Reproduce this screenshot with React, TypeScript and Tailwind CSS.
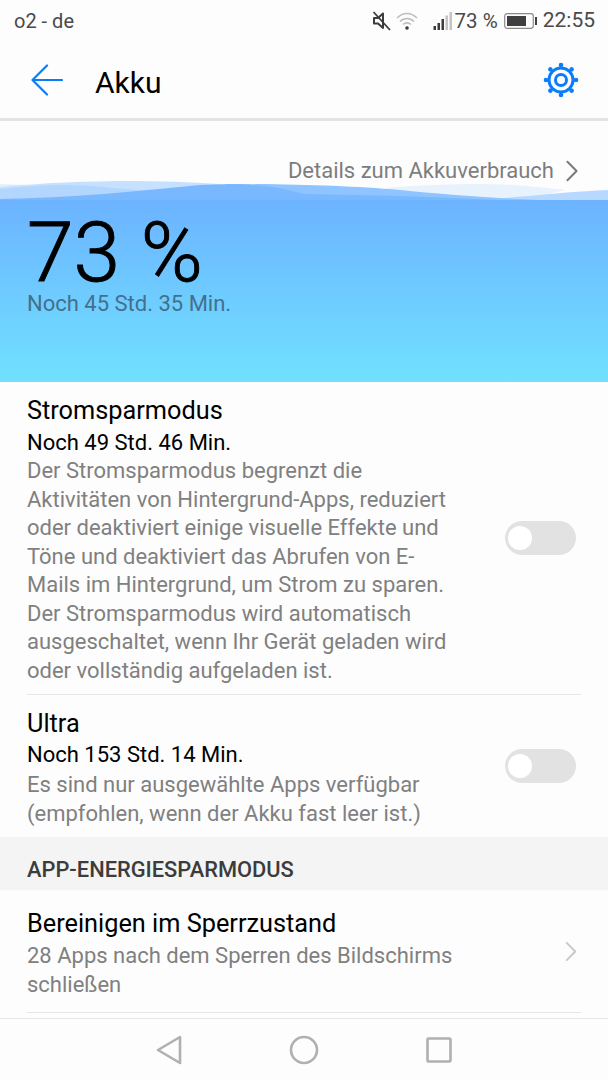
function Toggle() {
  return (
    <div className="w-[71px] h-[34px] rounded-full bg-[#e2e2e2] flex items-center pl-[3px] shrink-0">
      <div className="w-[24px] h-[24px] rounded-full bg-white" />
    </div>
  );
}
function Chevron({ color, className }: { color: string; className: string }) {
  return (
    <svg className={className} viewBox="0 0 14 24" fill="none" stroke={color} strokeWidth="2.2" strokeLinecap="round" strokeLinejoin="round">
      <path d="M2 2 L12 12 L2 22" />
    </svg>
  );
}
const teeth = [0, 45, 90, 135, 180, 225, 270, 315];
export default function App() {
  return (
    <div className="w-[608px] h-[1080px] bg-[#fdfdfd] overflow-hidden flex flex-col font-['Roboto',sans-serif]">
      {/* status bar */}
      <div className="h-[42px] flex items-center pl-[14px] pr-[13px] text-[#4a4a4a] text-[20px] shrink-0">
        <span>o2 - de</span>
        <div className="ml-auto flex items-center">
          <svg width="20" height="20" viewBox="0 0 20 20" fill="none" stroke="#3c3c3c" strokeWidth="1.8">
            <path d="M2 7 H6 L11 2.5 V17 L6 12.5 H2 Z" fill="#fdfdfd" strokeWidth="2" strokeLinejoin="round" />
            <path d="M1.5 1 L18 19" />
          </svg>
          <svg className="ml-[3px]" width="24" height="20" viewBox="0 0 24 20" fill="none" stroke="#bdbdbd" strokeWidth="1.6">
            <path d="M2 7 C8 1 16 1 22 7" />
            <path d="M5 10.5 C9 6.5 15 6.5 19 10.5" />
            <path d="M8 13.5 C10.5 11.5 13.5 11.5 16 13.5" />
            <circle cx="12" cy="17" r="1.8" fill="#3c3c3c" stroke="none" />
          </svg>
          <svg className="ml-[14px]" width="20" height="20" viewBox="0 0 20 20">
            <rect x="0.5" y="15" width="2.5" height="4" fill="#3c3c3c" />
            <rect x="4.5" y="12" width="2.5" height="7" fill="#3c3c3c" />
            <rect x="8.5" y="8" width="2.5" height="11" fill="#3c3c3c" />
            <rect x="12.5" y="4.5" width="2.5" height="14.5" fill="#c4c4c4" />
            <rect x="16.5" y="1" width="2.5" height="18" fill="#c4c4c4" />
          </svg>
          <span className="ml-[2px] text-[20.5px]">73 %</span>
          <svg className="ml-[6px]" width="34" height="18" viewBox="0 0 34 18">
            <rect x="0.7" y="1.7" width="28.6" height="14.6" rx="2.5" fill="none" stroke="#8a8a8a" strokeWidth="1.2" />
            <rect x="3" y="4" width="19" height="10" fill="#3f3f3f" />
            <rect x="31" y="5" width="2" height="8" fill="#3f3f3f" />
          </svg>
          <span className="ml-[5px] text-[21px]">22:55</span>
        </div>
      </div>
      {/* toolbar */}
      <div className="h-[79px] border-b-[3px] border-[#e3e3e3] flex items-center pl-[31px] pr-[29px] shrink-0">
        <svg width="32" height="32" viewBox="0 0 32 32" fill="none" stroke="#0a7dfa" strokeWidth="2.2" strokeLinecap="round" strokeLinejoin="round">
          <path d="M1.5 16 H31 M16 1.5 L1.5 16 L16 30.5" />
        </svg>
        <span className="ml-[32px] text-[30px] text-black leading-none mt-[5px]">Akku</span>
        <svg className="ml-auto" width="36" height="36" viewBox="0 0 36 36" fill="none" stroke="#0a7dfa">
          <circle cx="18" cy="18" r="12" strokeWidth="3" />
          <circle cx="18" cy="18" r="5.5" strokeWidth="3" />
          <g fill="#0a7dfa" stroke="none">
            {teeth.map((a) => (
              <circle key={a} cx="18" cy="3" r="2.3" transform={`rotate(${a} 18 18)`} />
            ))}
          </g>
        </svg>
      </div>
      {/* hero */}
      <div className="relative h-[261px] shrink-0 flex flex-col">
        <div className="h-[79px] shrink-0" />
        <div className="flex-1 bg-gradient-to-b from-[#6cb3ff] to-[#70e1ff]" />
        <svg className="absolute left-0 top-[59px]" width="608" height="21" viewBox="0 180 608 21">
          <path d="M0 184 C20 185 40 185 70 185 V201 H0 Z" fill="#e3f0fe" />
          <path d="M0 187 C40 183 90 181 130 181 C160 181 190 182 220 184 V201 H0 Z" fill="#c6e0ff" />
          <path d="M0 189 C20 187 40 185 70 185 C100 186 120 189 150 191 V201 H0 Z" fill="#b3d6ff" />
          <path d="M385 188 C420 185 450 184 480 184 C510 184 540 187 565 190 L520 201 L400 201 Z" fill="#e7f2fd" />
          <path d="M505 198 C540 195 580 191 608 190 V201 H505 Z" fill="#b8d9ff" />
          <path d="M225 184 C300 184 350 186 400 190 C440 194 490 198 540 200 V201 H225 Z" fill="#8ec4ff" />
          <path d="M0 199 C70 198 140 191 200 185 C240 183 270 184 304 194 C370 195 440 197 500 200 V201 H0 Z" fill="#79b8ff" />
          <path d="M0 200 H608 V201 H0 Z" fill="#6cb3ff" />
        </svg>
        <div className="absolute inset-x-0 top-0 pt-[33px] pr-[29px] flex items-center justify-end text-[#7d7d7d] text-[22px]">
          <span>Details zum Akkuverbrauch</span>
          <Chevron color="#7a7a7a" className="ml-[11px] w-[14px] h-[22px]" />
        </div>
        <div className="absolute left-[27px] top-[93px] flex flex-col">
          <span className="text-[84px] leading-[78px] text-black font-light [-webkit-text-stroke:1px_black]">73 %</span>
          <span className="text-[22px] leading-[24px] text-[#43708d]">Noch 45 Std. 35 Min.</span>
        </div>
      </div>
      {/* settings */}
      <div className="pl-[27px] pr-[27px] flex flex-col">
        <div className="flex items-start border-b border-[#e6e6e6] h-[313px] pt-[15px]">
          <div className="w-[440px] shrink-0">
            <div className="text-[25.3px] leading-[28px] text-black">Stromsparmodus</div>
            <div className="text-[22px] leading-[28px] text-black mt-[4px]">Noch 49 Std. 46 Min.</div>
            <div className="text-[22px] leading-[28.5px] text-[#808080]">
              Der Stromsparmodus begrenzt die<br />Aktivitäten von Hintergrund-Apps, reduziert<br />oder deaktiviert einige visuelle Effekte und<br />Töne und deaktiviert das Abrufen von E-<br />Mails im Hintergrund, um Strom zu sparen.<br />Der Stromsparmodus wird automatisch<br />ausgeschaltet, wenn Ihr Gerät geladen wird<br />oder vollständig aufgeladen ist.
            </div>
          </div>
          <div className="ml-auto mr-[5px] mt-[124px]"><Toggle /></div>
        </div>
        <div className="flex items-start h-[142px] pt-[15px]">
          <div className="w-[440px] shrink-0">
            <div className="text-[25.3px] leading-[28px] text-black">Ultra</div>
            <div className="text-[22px] leading-[28px] text-black mt-[3px]">Noch 153 Std. 14 Min.</div>
            <div className="text-[22px] leading-[28.5px] text-[#808080] mt-[2px]">
              Es sind nur ausgewählte Apps verfügbar<br />(empfohlen, wenn der Akku fast leer ist.)
            </div>
          </div>
          <div className="ml-auto mr-[5px] mt-[39px]"><Toggle /></div>
        </div>
      </div>
      <div className="h-[53px] bg-[#f4f4f4] flex items-center pl-[27px] pt-[13px] text-[21.85px] font-medium text-[#3c3c3c] shrink-0">APP-ENERGIESPARMODUS</div>
      <div className="mx-[27px] h-[123px] border-b border-[#e6e6e6] flex items-center shrink-0">
        <div className="mt-[6px]">
          <div className="text-[25.3px] leading-[28px] text-black">Bereinigen im Sperrzustand</div>
          <div className="text-[22px] leading-[29px] text-[#808080] mt-[3px]">28 Apps nach dem Sperren des Bildschirms<br />schließen</div>
        </div>
        <Chevron color="#c8c8c8" className="ml-auto mr-[4px] w-[12px] h-[21px]" />
      </div>
      <div className="h-[5px] shrink-0" />
      {/* nav */}
      <div className="flex-1 border-t border-[#e6e6e6] flex items-center justify-center gap-[107px]">
        <svg width="26" height="30" viewBox="0 0 26 30" fill="none" stroke="#b0b0b0" strokeWidth="2.6" strokeLinejoin="round"><path d="M2 15 L24 2 V28 Z" /></svg>
        <svg width="30" height="30" viewBox="0 0 30 30" fill="none" stroke="#b0b0b0" strokeWidth="2.6"><circle cx="15" cy="15" r="13" /></svg>
        <svg width="26" height="26" viewBox="0 0 26 26" fill="none" stroke="#b0b0b0" strokeWidth="2.6" strokeLinejoin="round"><rect x="1.5" y="1.5" width="23" height="23" rx="1" /></svg>
      </div>
    </div>
  );
}
